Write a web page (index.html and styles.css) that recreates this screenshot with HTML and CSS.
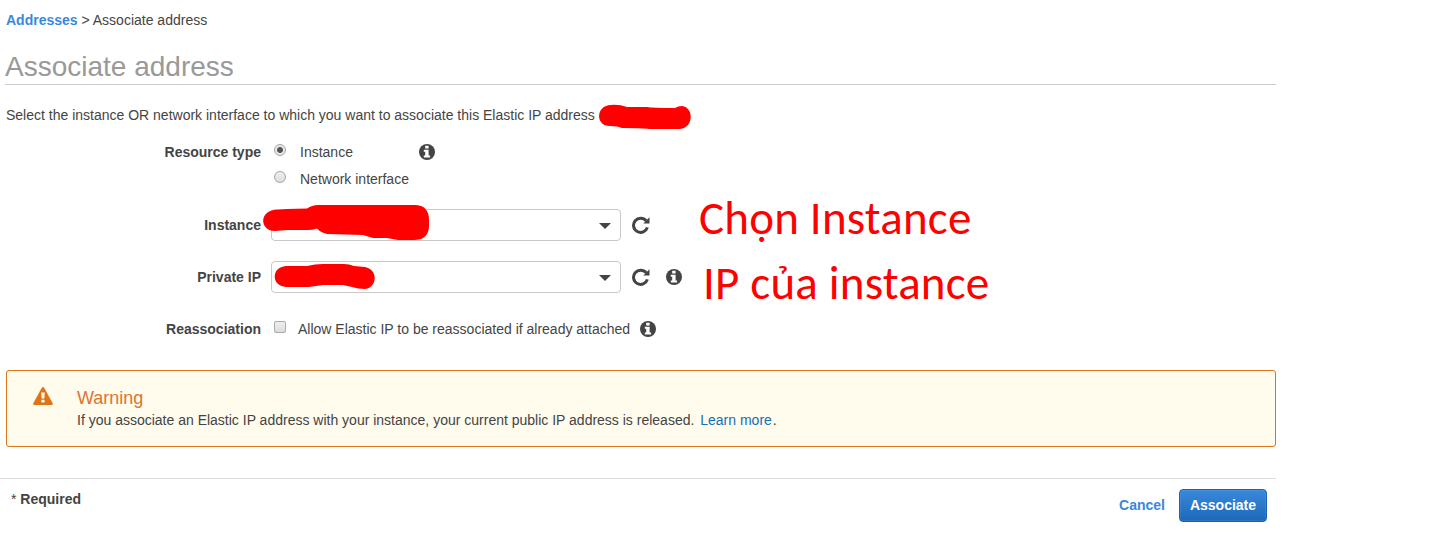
FILE: index.html
```
<!DOCTYPE html>
<html lang="en">
<head>
<meta charset="utf-8">
<title>Associate address</title>
<link rel="stylesheet" href="styles.css">
</head>
<body>
<svg class="defs" width="0" height="0">
  <symbol id="info" viewBox="0 0 16 16"><circle cx="8" cy="8" r="8" fill="#444"/><path d="M6.2 1.8h3.4v2.7H6.2zM4.8 5.7h4.8v5.8h1.5v2H4.8v-2h1.4V7.7H4.8z" fill="#fff"/></symbol>
  <symbol id="refresh" viewBox="0 0 18 18"><path d="M14.2 4.9A7.1 7.1 0 1 0 15.4 11.400" fill="none" stroke="#444" stroke-width="3"/><path d="M17.5 1.2v6.200h-6.200z" fill="#444"/></symbol>
</svg>
<main class="page">
  <nav class="breadcrumb"><a class="crumb" href="#">Addresses</a> &gt; Associate address</nav>
  <h1 class="title">Associate address</h1>
  <p class="intro">Select the instance OR network interface to which you want to associate this Elastic IP address</p>
  <form class="form">
    <div class="row row-type">
      <span class="label">Resource type</span>
      <div class="options">
        <div class="option"><span class="radio checked"></span><span class="option-text">Instance</span><svg class="info info-type"><use href="#info"/></svg></div>
        <div class="option"><span class="radio"></span><span class="option-text">Network interface</span></div>
      </div>
    </div>
    <div class="row row-select">
      <span class="label">Instance</span>
      <div class="select"><span class="caret"></span></div>
      <svg class="refresh"><use href="#refresh"/></svg>
    </div>
    <div class="row row-select">
      <span class="label">Private IP</span>
      <div class="select"><span class="caret"></span></div>
      <svg class="refresh"><use href="#refresh"/></svg>
      <svg class="info info-ip"><use href="#info"/></svg>
    </div>
    <div class="row row-check">
      <span class="label">Reassociation</span>
      <span class="checkbox"></span>
      <span class="check-text">Allow Elastic IP to be reassociated if already attached</span>
      <svg class="info info-check"><use href="#info"/></svg>
    </div>
  </form>
  <section class="warning">
    <svg class="warning-icon" viewBox="0 0 20 18"><path d="M8.8.7Q10-.7 11.2.7L19.8 16.4Q20 18 18.6 18H1.4Q0 18 .2 16.4z" fill="#df7417"/><path d="M8.2 5.5h3.6l-.5 6H8.700zM8.400 12.800h3.200v2.700H8.400z" fill="#fffbed"/></svg>
    <div>
      <h2 class="warning-title">Warning</h2>
      <p class="warning-text">If you associate an Elastic IP address with your instance, your current public IP address is released. <a class="learn" href="#">Learn more</a>.</p>
    </div>
  </section>
  <footer class="footer">
    <span class="required"><span class="star">*</span> Required</span>
    <a class="cancel" href="#">Cancel</a>
    <button class="submit" type="button">Associate</button>
  </footer>
</main>
<svg class="marks" width="1429" height="536" fill="#f00">
  <path d="M610 105Q619 104 627 107L647 107Q653 108 675 108Q678 106 682 106C694 107 694 128 680 129L649 129Q645 128 622 128Q618 126 610 126C595 126 596 106 610 105z"/>
  <path d="M274 210L287 209L307 208.500Q312 205 318 205H416Q429 206 429 220V227Q428 240 414 240H398L387 238L373 238L363 235L346 234.500L327 234Q320 232 317 228.500Q313 230 307 230H288L275 231C260 231 259 212 274 210z"/>
  <path d="M286 266H307Q315 264 323 264H344Q349 264 354 266L365 267C379 270 377 288 365 289Q358 289 352 287L343 285H323L309 287L286 287C271 286 271 267 286 266z"/>
</svg>
<div class="note note-instance">Chọn Instance</div>
<div class="note note-ip">IP của instance</div>
</body>
</html>
```
FILE: styles.css
```
* { box-sizing: border-box; }
body { margin: 0; background: #fff; color: #444; font: 14px/16px "Liberation Sans", Arial, sans-serif; width: 1429px; height: 536px; overflow: hidden; }
a { text-decoration: none; }
p, h1, h2 { margin: 0; font-weight: normal; }
svg { display: block; flex: none; }
.defs { position: absolute; }
.page { width: 1276px; padding-top: 12px; }
.breadcrumb { padding-left: 6px; }
.crumb { color: #3a87dd; font-weight: bold; }
.title { margin: 20px 0 0 5px; height: 37px; border-bottom: 1px solid #ccc; color: #999; font-size: 28px; line-height: 38px; }
.intro { margin: 22px 0 0 6px; }
.row { display: flex; }
.label { width: 261px; text-align: right; font-weight: bold; flex: none; }
.row-type { margin-top: 21px; }
.options { padding-left: 13px; }
.option { display: flex; height: 27px; }
.radio { width: 12px; height: 12px; border: 1px solid #a5a5a5; border-radius: 50%; background: linear-gradient(#eee, #ddd); }
.checked { background: radial-gradient(circle, #555 0 2.5px, #e8e8e8 3.5px); }
.option-text { margin-left: 14px; }
.info { width: 16px; height: 16px; }
.info-type { margin-left: 66px; }
.row-select { height: 32px; align-items: center; margin-top: 20px; }
.row-type + .row-select { margin-top: 11px; }
.select { width: 350px; height: 32px; margin-left: 10px; border: 1px solid #c8c8c8; border-radius: 4px; display: flex; align-items: center; justify-content: flex-end; padding: 2px 9px 0 0; }
.caret { border: 6px solid transparent; border-top-color: #444; border-bottom: 0; }
.refresh { width: 18px; height: 18px; margin-left: 11px; }
.info-ip { margin-left: 16px; }
.row-check { margin-top: 28px; height: 16px; }
.checkbox { width: 12px; height: 12px; margin-left: 13px; border: 1px solid #aaa; border-radius: 2px; background: linear-gradient(#eee, #ddd); }
.check-text { margin-left: 12px; }
.info-check { margin-left: 10px; }
.warning { display: flex; margin: 33px 0 0 6px; height: 77px; border: 1px solid #df7417; border-radius: 3px; background: #fffbed; padding: 16px 0 0 26px; }
.warning-icon { width: 20px; height: 18px; margin-right: 24px; }
.warning-title { color: #df7332; font-size: 18px; line-height: 22px; }
.warning-text { line-height: 16px; margin-top: 3px; }
.learn { color: #146eb4; margin: 0 1px 0 2px; }
.footer { display: flex; margin-top: 31px; border-top: 1px solid #ddd; padding: 10px 9px 0 11px; }
.required { font-weight: bold; margin-top: 2px; }
.star { font-weight: normal; }
.cancel { margin: 8px 14px 0 auto; color: #3a87dd; font-weight: bold; }
.submit { width: 88px; height: 33px; padding: 0 0 1px; border: 1px solid #1a62b3; border-radius: 4px; background: linear-gradient(#3a88dc, #1c68ba); box-shadow: inset 0 0 0 1px rgba(255,255,255,.08); color: #fff; font: bold 14px/16px "Liberation Sans", Arial, sans-serif; }
.marks { position: absolute; left: 0; top: 0; }
.note { position: absolute; color: #f00; font: 47px/52px Carlito, Lato, "Open Sans", sans-serif; letter-spacing: .2px; white-space: nowrap; }
.note-instance { left: 699px; top: 192px; }
.note-ip { left: 703px; top: 257px; }
```
